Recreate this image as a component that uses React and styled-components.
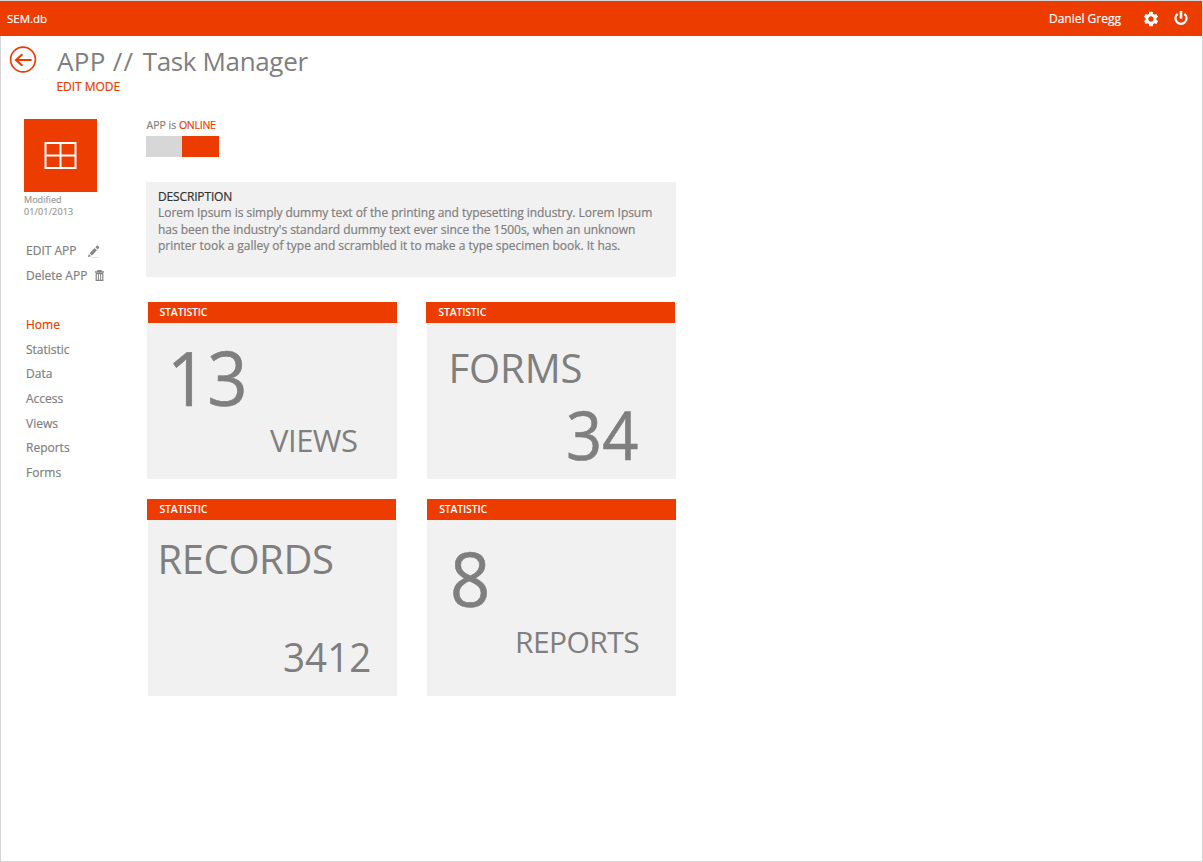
import React from 'react';
import styled, { createGlobalStyle } from 'styled-components';
import { MdSettings } from 'react-icons/md';

const ORANGE = '#ec3c00';
const GREY = '#7f7f7f';
const PANEL = '#f1f1f1';
const LINE = '#d4d4d4';
const UI = '"Open Sans", "Noto Sans", sans-serif';

const GlobalStyle = createGlobalStyle`
  *, *::before, *::after { box-sizing: border-box; }
  body { margin: 0; background: #fff; }
  svg { display: block; }
`;

const Page = styled.div`
  display: flex;
  flex-direction: column;
  width: 1203px;
  height: 862px;
  overflow: hidden;
  border: solid ${LINE};
  border-width: 1px 1px 1px 0;
  background: #fff;
  color: ${GREY};
  font: 400 12px ${UI};
  white-space: nowrap;
  -webkit-text-stroke: 0.2px currentColor;
`;

const TopBar = styled.header`
  display: flex;
  align-items: center;
  flex: none;
  height: 35px;
  padding: 0 14px 0 7px;
  background: ${ORANGE};
  color: #fff;
`;

const Brand = styled.span`
  flex: 1;
  font-size: 11.5px;
`;

const UserName = styled.span`
  margin-right: 21px;
`;

const BarButton = styled.span`
  display: block;
  margin-right: ${(p) => p.$gap || 0}px;
`;

const Body = styled.div`
  flex: 1;
  border-left: 1px solid ${LINE};
`;

const TitleRow = styled.div`
  display: flex;
  height: 82px;
  padding: 9px 0 0 8px;
`;

const TitleText = styled.div`
  margin-left: 20px;
`;

const Title = styled.h1`
  margin: 0;
  font: 400 26px/32px ${UI};
  letter-spacing: -0.35px;
  -webkit-text-stroke: 0;
`;

const Section = styled.span`
  letter-spacing: 0.3px;
`;

const Slashes = styled.span`
  letter-spacing: 1.4px;
`;

const Mode = styled.div`
  margin: 2px 0 0 -0.5px;
  color: ${ORANGE};
  line-height: 16px;
  letter-spacing: -0.05px;
`;

const Columns = styled.div`
  display: flex;
`;

const Sidebar = styled.aside`
  width: 145px;
  padding: 1px 0 0 23px;
`;

const Tile = styled.div`
  display: flex;
  align-items: center;
  justify-content: center;
  width: 73px;
  height: 73px;
  background: ${ORANGE};
`;

const Modified = styled.div`
  margin-top: 2px;
  color: #9a9a9a;
  font: 9px/12px ${UI};
  letter-spacing: ${(p) => p.$track || 0}px;

  & + & { margin-top: 0; }
`;

const Menu = styled.nav`
  display: flex;
  flex-direction: column;
  margin: ${(p) => p.$top}px 0 0 2px;
`;

const MenuItem = styled.a`
  display: flex;
  align-items: center;
  gap: ${(p) => p.$gap || 0}px;
  height: 24.65px;
  color: ${(p) => (p.$active ? ORANGE : GREY)};
`;

const Content = styled.main`
  width: 531px;
`;

const Status = styled.div`
  padding-left: 0.5px;
  font-size: 10.5px;
  line-height: 14px;
`;

const Online = styled.span`
  color: ${ORANGE};
  letter-spacing: -0.25px;
`;

const Toggle = styled.div`
  display: flex;
  width: 73px;
  height: 21px;
  margin-top: 4px;
  background: #d7d7d7;
`;

const Knob = styled.div`
  width: 37px;
  margin-left: auto;
  background: ${ORANGE};
`;

const Description = styled.section`
  width: 530px;
  height: 95px;
  margin-top: 25px;
  padding: 6px 12px;
  background: ${PANEL};
`;

const DescriptionHead = styled.h2`
  margin: 0;
  color: #333;
  font: 400 12px/17px ${UI};
  letter-spacing: -0.15px;
`;

const DescriptionLine = styled.div`
  line-height: 16.5px;
  letter-spacing: ${(p) => p.$track}px;
`;

const Cards = styled.div`
  display: grid;
  grid-template-columns: 250px 250px;
  grid-template-rows: 177px 197px;
  gap: 20px 29px;
  margin: 25px 0 0 1px;
`;

const Card = styled.section`
  display: flex;
  flex-direction: column;
`;

const CardHead = styled.h3`
  width: 249px;
  height: 21px;
  margin: 0 0 0 ${(p) => p.$left}px;
  padding-left: ${(p) => p.$pad}px;
  background: ${ORANGE};
  color: #fff;
  font: 600 10.5px/20px ${UI};
  letter-spacing: -0.17px;
  -webkit-text-stroke: 0;
`;

const CardBody = styled.div`
  flex: 1;
  margin-left: ${(p) => p.$left}px;
  background: ${PANEL};
`;

const Figure = styled.div`
  width: fit-content;
  margin-left: ${(p) => p.$x}px;
  padding-top: ${(p) => p.$gap}px;
  font: 400 ${(p) => p.$size}px/1 ${UI};
  letter-spacing: ${(p) => p.$track || 0}px;
  transform: scaleX(${(p) => p.$stretch || 1});
  transform-origin: left;
  -webkit-text-stroke: ${(p) => (p.$size > 60 ? 0.6 : 0)}px currentColor;
`;

const BackIcon = () => (
  <svg width="28" height="28" viewBox="0 0 28 28" fill="none" stroke={ORANGE}>
    <circle cx="14" cy="14.5" r="12.4" strokeWidth="1.7" />
    <path d="M22.6 15H7.2M13.4 9.2L7 15l6.4 5.8" strokeWidth="2.1" />
  </svg>
);

const PowerIcon = () => (
  <svg width="14" height="16" viewBox="0 0 14 16" fill="none" stroke="#fff">
    <path d="M3.6 2.8A5.6 5.6 0 1 0 10.4 2.8" strokeWidth="2.2" />
    <path d="M7 0V7.6" strokeWidth="2.6" />
  </svg>
);

const WindowIcon = () => (
  <svg width="33" height="27" viewBox="0 0 33 27" fill="none" stroke="#fff" strokeWidth="2">
    <path d="M1.5 1h30v25h-30zM16.5 1v25M1.5 13.5h30" />
  </svg>
);

const PencilIcon = () => (
  <svg width="13" height="15" viewBox="0 -2 13 15" fill="#858585">
    <path d="M1 12l.8-3 2.3 2.2zM2.6 8.2l5-5.2 2.3 2.2-5 5.3zM8.4 2.2L9.8.8q.6-.5 1.2 0l1 1q.5.6 0 1.2l-1.3 1.4z" />
    <path d="M4.5 12h7v.8h-7z" fill="#d8d8d8" />
  </svg>
);

const TrashIcon = () => (
  <svg width="9" height="11" viewBox="0 0 9 11" fill="none" stroke="#858585">
    <path d="M0 2h9M3 1.8V.6h3v1.2" strokeWidth="1.4" />
    <path d="M1.2 3.5v6.8h6.6V3.5M1 3.6h7" strokeWidth="1.2" />
    <path d="M3.4 4v6M5.6 4v6" strokeWidth="1" />
  </svg>
);

const NAV = [
  { label: 'Home', active: true },
  { label: 'Statistic' },
  { label: 'Data' },
  { label: 'Access' },
  { label: 'Views' },
  { label: 'Reports' },
  { label: 'Forms' },
];

const DESCRIPTION = [
  { track: -0.05, text: 'Lorem Ipsum is simply dummy text of the printing and typesetting industry. Lorem Ipsum' },
  { track: -0.04, text: "has been the industry's standard dummy text ever since the 1500s, when an unknown" },
  { track: -0.02, text: 'printer took a galley of type and scrambled it to make a type specimen book. It has.' },
];

const CARDS = [
  {
    head: 1, pad: 11.5, body: 0,
    lines: [
      { text: '13', size: 75, x: 20, gap: 17, stretch: 0.94 },
      { text: 'VIEWS', size: 31, x: 123, gap: 10, track: -0.5 },
    ],
  },
  {
    head: 0, pad: 12.3, body: 1,
    lines: [
      { text: 'FORMS', size: 40, x: 21.5, gap: 25, track: -0.1 },
      { text: '34', size: 68, x: 138.5, gap: 12, stretch: 0.93 },
    ],
  },
  {
    head: 0, pad: 12.5, body: 1,
    lines: [
      { text: 'RECORDS', size: 40, x: 9.5, gap: 19, track: -0.4 },
      { text: '3412', size: 40, x: 135, gap: 58, stretch: 0.965 },
    ],
  },
  {
    head: 1, pad: 12.2, body: 1,
    lines: [
      { text: '8', size: 75, x: 22.5, gap: 21, stretch: 0.94 },
      { text: 'REPORTS', size: 30, x: 88, gap: 11, track: -0.55 },
    ],
  },
];

export default function App() {
  return (
    <>
      <GlobalStyle />
      <Page>
        <TopBar>
          <Brand>SEM.db</Brand>
          <UserName>Daniel Gregg</UserName>
          <BarButton $gap={14}><MdSettings size={18} /></BarButton>
          <BarButton><PowerIcon /></BarButton>
        </TopBar>
        <Body>
          <TitleRow>
            <BackIcon />
            <TitleText>
              <Title><Section>APP </Section><Slashes>// </Slashes>Task Manager</Title>
              <Mode>EDIT MODE</Mode>
            </TitleText>
          </TitleRow>
          <Columns>
            <Sidebar>
              <Tile><WindowIcon /></Tile>
              <Modified $track={0.05}>Modified</Modified>
              <Modified $track={0.15}>01/01/2013</Modified>
              <Menu $top={20.5}>
                <MenuItem $gap={11}>EDIT APP<PencilIcon /></MenuItem>
                <MenuItem $gap={8}>Delete APP<TrashIcon /></MenuItem>
              </Menu>
              <Menu $top={24.5}>
                {NAV.map((n) => (
                  <MenuItem key={n.label} $active={n.active}>{n.label}</MenuItem>
                ))}
              </Menu>
            </Sidebar>
            <Content>
              <Status>APP is <Online>ONLINE</Online></Status>
              <Toggle><Knob /></Toggle>
              <Description>
                <DescriptionHead>DESCRIPTION</DescriptionHead>
                {DESCRIPTION.map((d) => (
                  <DescriptionLine key={d.text} $track={d.track}>{d.text}</DescriptionLine>
                ))}
              </Description>
              <Cards>
                {CARDS.map((c) => (
                  <Card key={c.lines[0].text}>
                    <CardHead $left={c.head} $pad={c.pad}>STATISTIC</CardHead>
                    <CardBody $left={c.body}>
                      {c.lines.map((l) => (
                        <Figure
                          key={l.text}
                          $size={l.size}
                          $x={l.x}
                          $gap={l.gap}
                          $track={l.track}
                          $stretch={l.stretch}
                        >
                          {l.text}
                        </Figure>
                      ))}
                    </CardBody>
                  </Card>
                ))}
              </Cards>
            </Content>
          </Columns>
        </Body>
      </Page>
    </>
  );
}
